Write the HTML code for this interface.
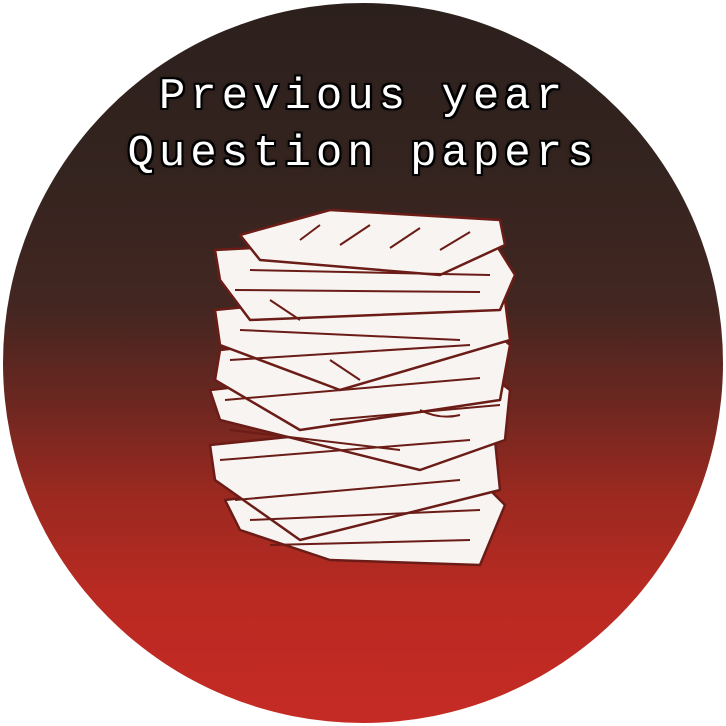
<!DOCTYPE html>
<html><head><style>
html,body{margin:0;padding:0;background:#fff;width:726px;height:726px;overflow:hidden}
.c{position:absolute;left:3px;top:3px;width:720px;height:720px;border-radius:50%;
background:linear-gradient(180deg,#2c201d 0%,#35241f 25%,#432621 42%,#6a2720 55%,#9a2920 68%,#b92a22 82%,#c52b24 100%);overflow:hidden}
.t{position:absolute;left:0;width:726px;text-align:center;font-family:"Liberation Mono",monospace;font-size:44px;letter-spacing:5px;color:#fff;
text-shadow:-2px 0 #000,2px 0 #000,0 -2px #000,0 2px #000,-2px -2px #000,2px 2px #000,-2px 2px #000,2px -2px #000,0 0 5px #000}
svg{position:absolute;left:0;top:0}
</style></head><body>
<div class="c"></div>
<svg width="726" height="726" viewBox="0 0 726 726">
<g fill="#f7f4f2" stroke="#6b1c16" stroke-width="2.5" stroke-linejoin="round">
<path d="M225 500 L470 470 L505 505 L480 565 L330 560 L240 530 Z"/>
<path d="M210 445 L455 420 L495 440 L500 490 L300 540 L215 480 Z"/>
<path d="M210 390 L470 360 L510 390 L505 440 L420 470 L220 420 Z"/>
<path d="M220 350 L480 320 L510 345 L500 400 L300 430 L215 380 Z"/>
<path d="M215 310 L470 285 L505 300 L510 340 L340 390 L220 345 Z"/>
<path d="M215 250 L490 235 L515 275 L500 310 L250 320 L220 280 Z"/>
<path d="M240 235 L330 210 L500 220 L505 245 L440 275 L260 260 Z"/>
</g>
<g stroke="#6b1c16" stroke-width="2" fill="none">
<path d="M250 270 L490 275 M235 290 L480 292 M240 330 L460 340 M230 360 L470 345 M225 400 L480 378 M230 430 L400 450 M330 420 L500 405 M220 460 L470 440 M235 500 L460 480 M250 520 L480 510 M270 545 L470 540"/>
<path d="M300 240 L320 225 M340 245 L370 225 M390 248 L420 228 M440 250 L470 232 M270 300 L300 320 M330 360 L360 380 M420 410 Q440 420 460 415"/>
</g>
</svg>
<div class="t" style="top:72px">Previous year</div>
<div class="t" style="top:129px">Question papers</div>
</body></html>
